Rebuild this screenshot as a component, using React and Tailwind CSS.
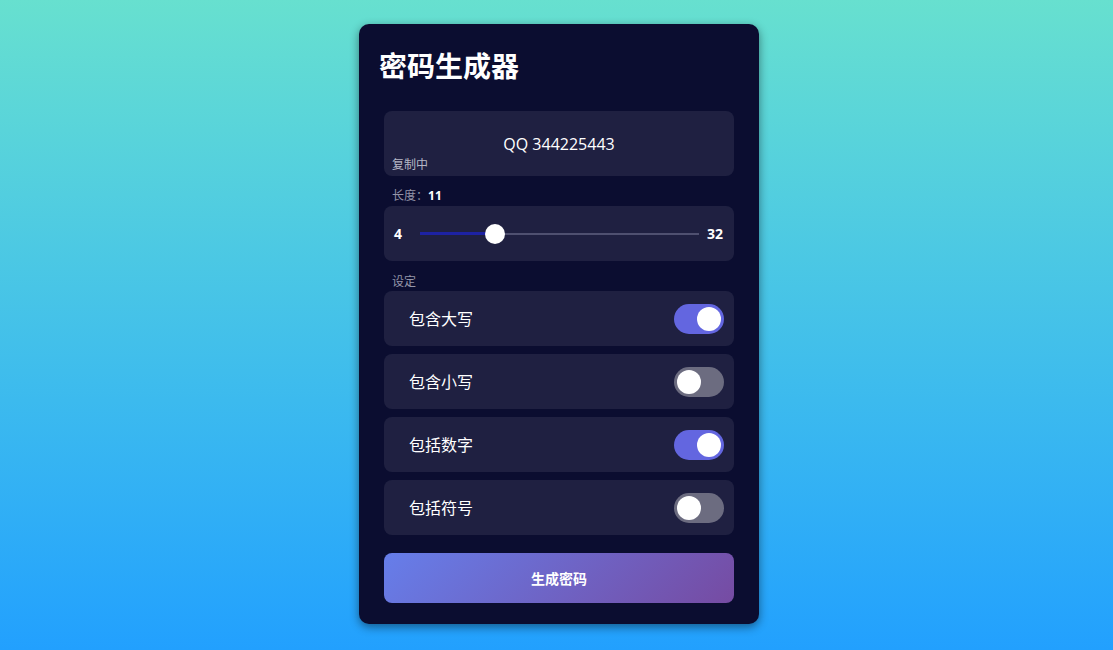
import React, { useState } from "react";

const FONT = { fontFamily: '"Open Sans", "Noto Sans CJK SC", sans-serif' };

function Toggle({ on, onClick }) {
  return (
    <button
      onClick={onClick}
      className={`w-[50px] h-[30px] rounded-full p-[3px] flex items-center ${on ? "bg-[#6366e0] justify-end" : "bg-[#6c6c80] justify-start"}`}
    >
      <span className="block w-[24px] h-[24px] rounded-full bg-white" />
    </button>
  );
}

function SettingRow({ label, on, onClick }) {
  return (
    <div className="h-[55px] rounded-lg bg-[#1f2041] flex items-center justify-between pl-[25px] pr-[10px]">
      <span className="text-white text-[16px]">{label}</span>
      <Toggle on={on} onClick={onClick} />
    </div>
  );
}

export default function App() {
  const [length] = useState(11);
  const [opts, setOpts] = useState({ upper: true, lower: false, num: true, sym: false });
  const pct = (length - 4) / 28;
  const flip = (k) => setOpts((o) => ({ ...o, [k]: !o[k] }));

  return (
    <div style={FONT} className="min-h-[650px] w-full bg-gradient-to-b from-[#67e0cf] to-[#22a0fe] flex justify-center pl-[5px] pt-[24px]">
      <div className="w-[400px] h-[600px] bg-[#0b0d30] rounded-[10px] shadow-[0_3px_10px_rgba(0,0,0,0.45)] pt-[20px] pb-[21px]">
        <h1 className="px-[20px] text-white text-[28px] font-bold leading-[44px] mb-[23px]">密码生成器</h1>

        <div className="px-[25px]">
          {/* result */}
          <div className="relative h-[65px] rounded-lg bg-[#1f2041] flex items-center justify-center pt-[1px]">
            <span className="text-white text-[16px]">QQ 344225443</span>
            <span className="absolute left-[8px] bottom-[3px] text-[12px] leading-4 text-[#b6b7c6]">复制中</span>
          </div>

          {/* length */}
          <div className="mt-[12px] mb-[2px] pl-[8px] text-[12px] leading-4 text-[#9495a8]">
            长度：<span className="text-white font-bold">{length}</span>
          </div>
          <div className="h-[55px] rounded-lg bg-[#1f2041] flex items-center pl-[10px] pr-[11px]">
            <span className="text-white font-bold text-[14px] w-[26px]">4</span>
            <div className="relative flex-1 h-[20px] mr-[8px]">
              <div className="absolute left-0 right-0 top-[9px] h-[2px] bg-[#4f5070]" />
              <div
                className="absolute left-0 top-[8px] h-[3px] bg-[#1d22a3]"
                style={{ width: `calc(10px + ${pct} * (100% - 20px))` }}
              />
              <div
                className="absolute top-0 w-[20px] h-[20px] rounded-full bg-white"
                style={{ left: `calc(${pct} * (100% - 20px))` }}
              />
            </div>
            <span className="text-white font-bold text-[14px]">32</span>
          </div>

          {/* settings */}
          <div className="mt-[13px] mb-[1px] pl-[8px] text-[12px] leading-4 text-[#9495a8]">设定</div>
          <div className="flex flex-col gap-[8px]">
            <SettingRow label="包含大写" on={opts.upper} onClick={() => flip("upper")} />
            <SettingRow label="包含小写" on={opts.lower} onClick={() => flip("lower")} />
            <SettingRow label="包括数字" on={opts.num} onClick={() => flip("num")} />
            <SettingRow label="包括符号" on={opts.sym} onClick={() => flip("sym")} />
          </div>

          <button className="mt-[18px] w-full h-[50px] rounded-lg bg-[linear-gradient(135deg,#667eea,#764ba2)] text-white font-bold text-[14px]">
            生成密码
          </button>
        </div>
      </div>
    </div>
  );
}
